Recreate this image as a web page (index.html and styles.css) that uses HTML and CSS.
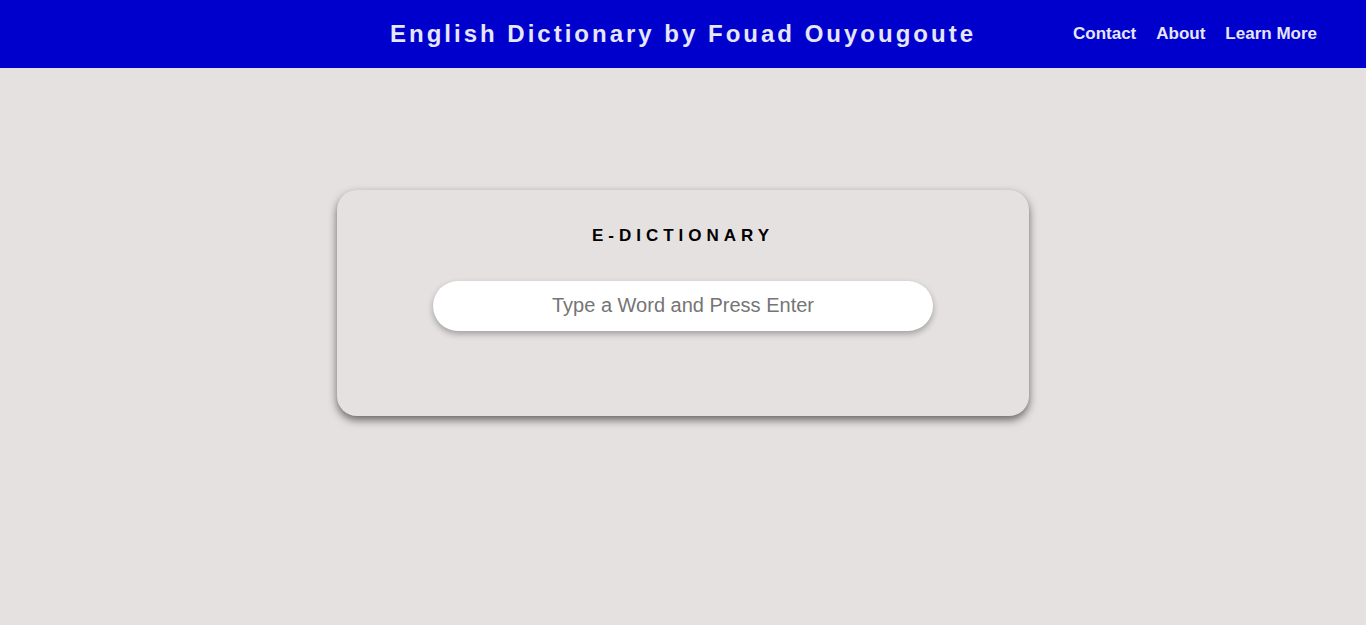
FILE: index.html
```html
<!DOCTYPE html>
<html lang="en">
<head>
<meta charset="utf-8">
<title>E-Dictionary</title>
<link rel="stylesheet" href="styles.css">
</head>
<body>
<header class="topbar">
  <div class="spacer"></div>
  <h1 class="brand">English Dictionary by Fouad Ouyougoute</h1>
  <nav class="nav">
    <a href="#">Contact</a>
    <a href="#">About</a>
    <a href="#">Learn More</a>
  </nav>
</header>
<main class="main">
  <section class="card">
    <h2 class="card-title">E-DICTIONARY</h2>
    <input class="search" type="text" placeholder="Type a Word and Press Enter">
  </section>
</main>
</body>
</html>
```
FILE: styles.css
```css
* { box-sizing: border-box; }
html, body { margin: 0; padding: 0; }
body {
  background: #e5e1e0;
  font-family: "Liberation Sans", Arial, sans-serif;
  min-height: 625px;
}
.topbar {
  height: 68px;
  background: #0000cd;
  display: grid;
  grid-template-columns: 1fr auto 1fr;
  align-items: center;
}
.brand {
  margin: 0;
  font-size: 24px;
  font-weight: bold;
  letter-spacing: 3px;
  color: #e6e6fa;
  line-height: 68px;
}
.nav {
  display: flex;
  justify-content: flex-end;
  gap: 20px;
  padding-right: 49px;
}
.nav a {
  color: #e6e6fa;
  text-decoration: none;
  font-weight: bold;
  font-size: 17px;
}
.main {
  display: flex;
  justify-content: center;
  padding-top: 122px;
}
.card {
  width: 692px;
  height: 226px;
  border-radius: 20px;
  background: #e5e1e0;
  box-shadow: 0 4px 8px rgba(0,0,0,0.55);
  display: flex;
  flex-direction: column;
  align-items: center;
  padding-top: 36px;
}
.card-title {
  margin: 0;
  font-size: 17px;
  font-weight: bold;
  letter-spacing: 5px;
  line-height: 20px;
  color: #000;
}
.search {
  margin-top: 35px;
  width: 500px;
  height: 50px;
  padding: 0 0 2px;
  border: none;
  border-radius: 25px;
  background: #fff;
  box-shadow: 0 3px 6px rgba(0,0,0,0.3);
  font-family: "Liberation Sans", Arial, sans-serif;
  font-size: 20px;
  text-align: center;
  outline: none;
  color: #333;
}
.search::placeholder { color: #757575; }
```
